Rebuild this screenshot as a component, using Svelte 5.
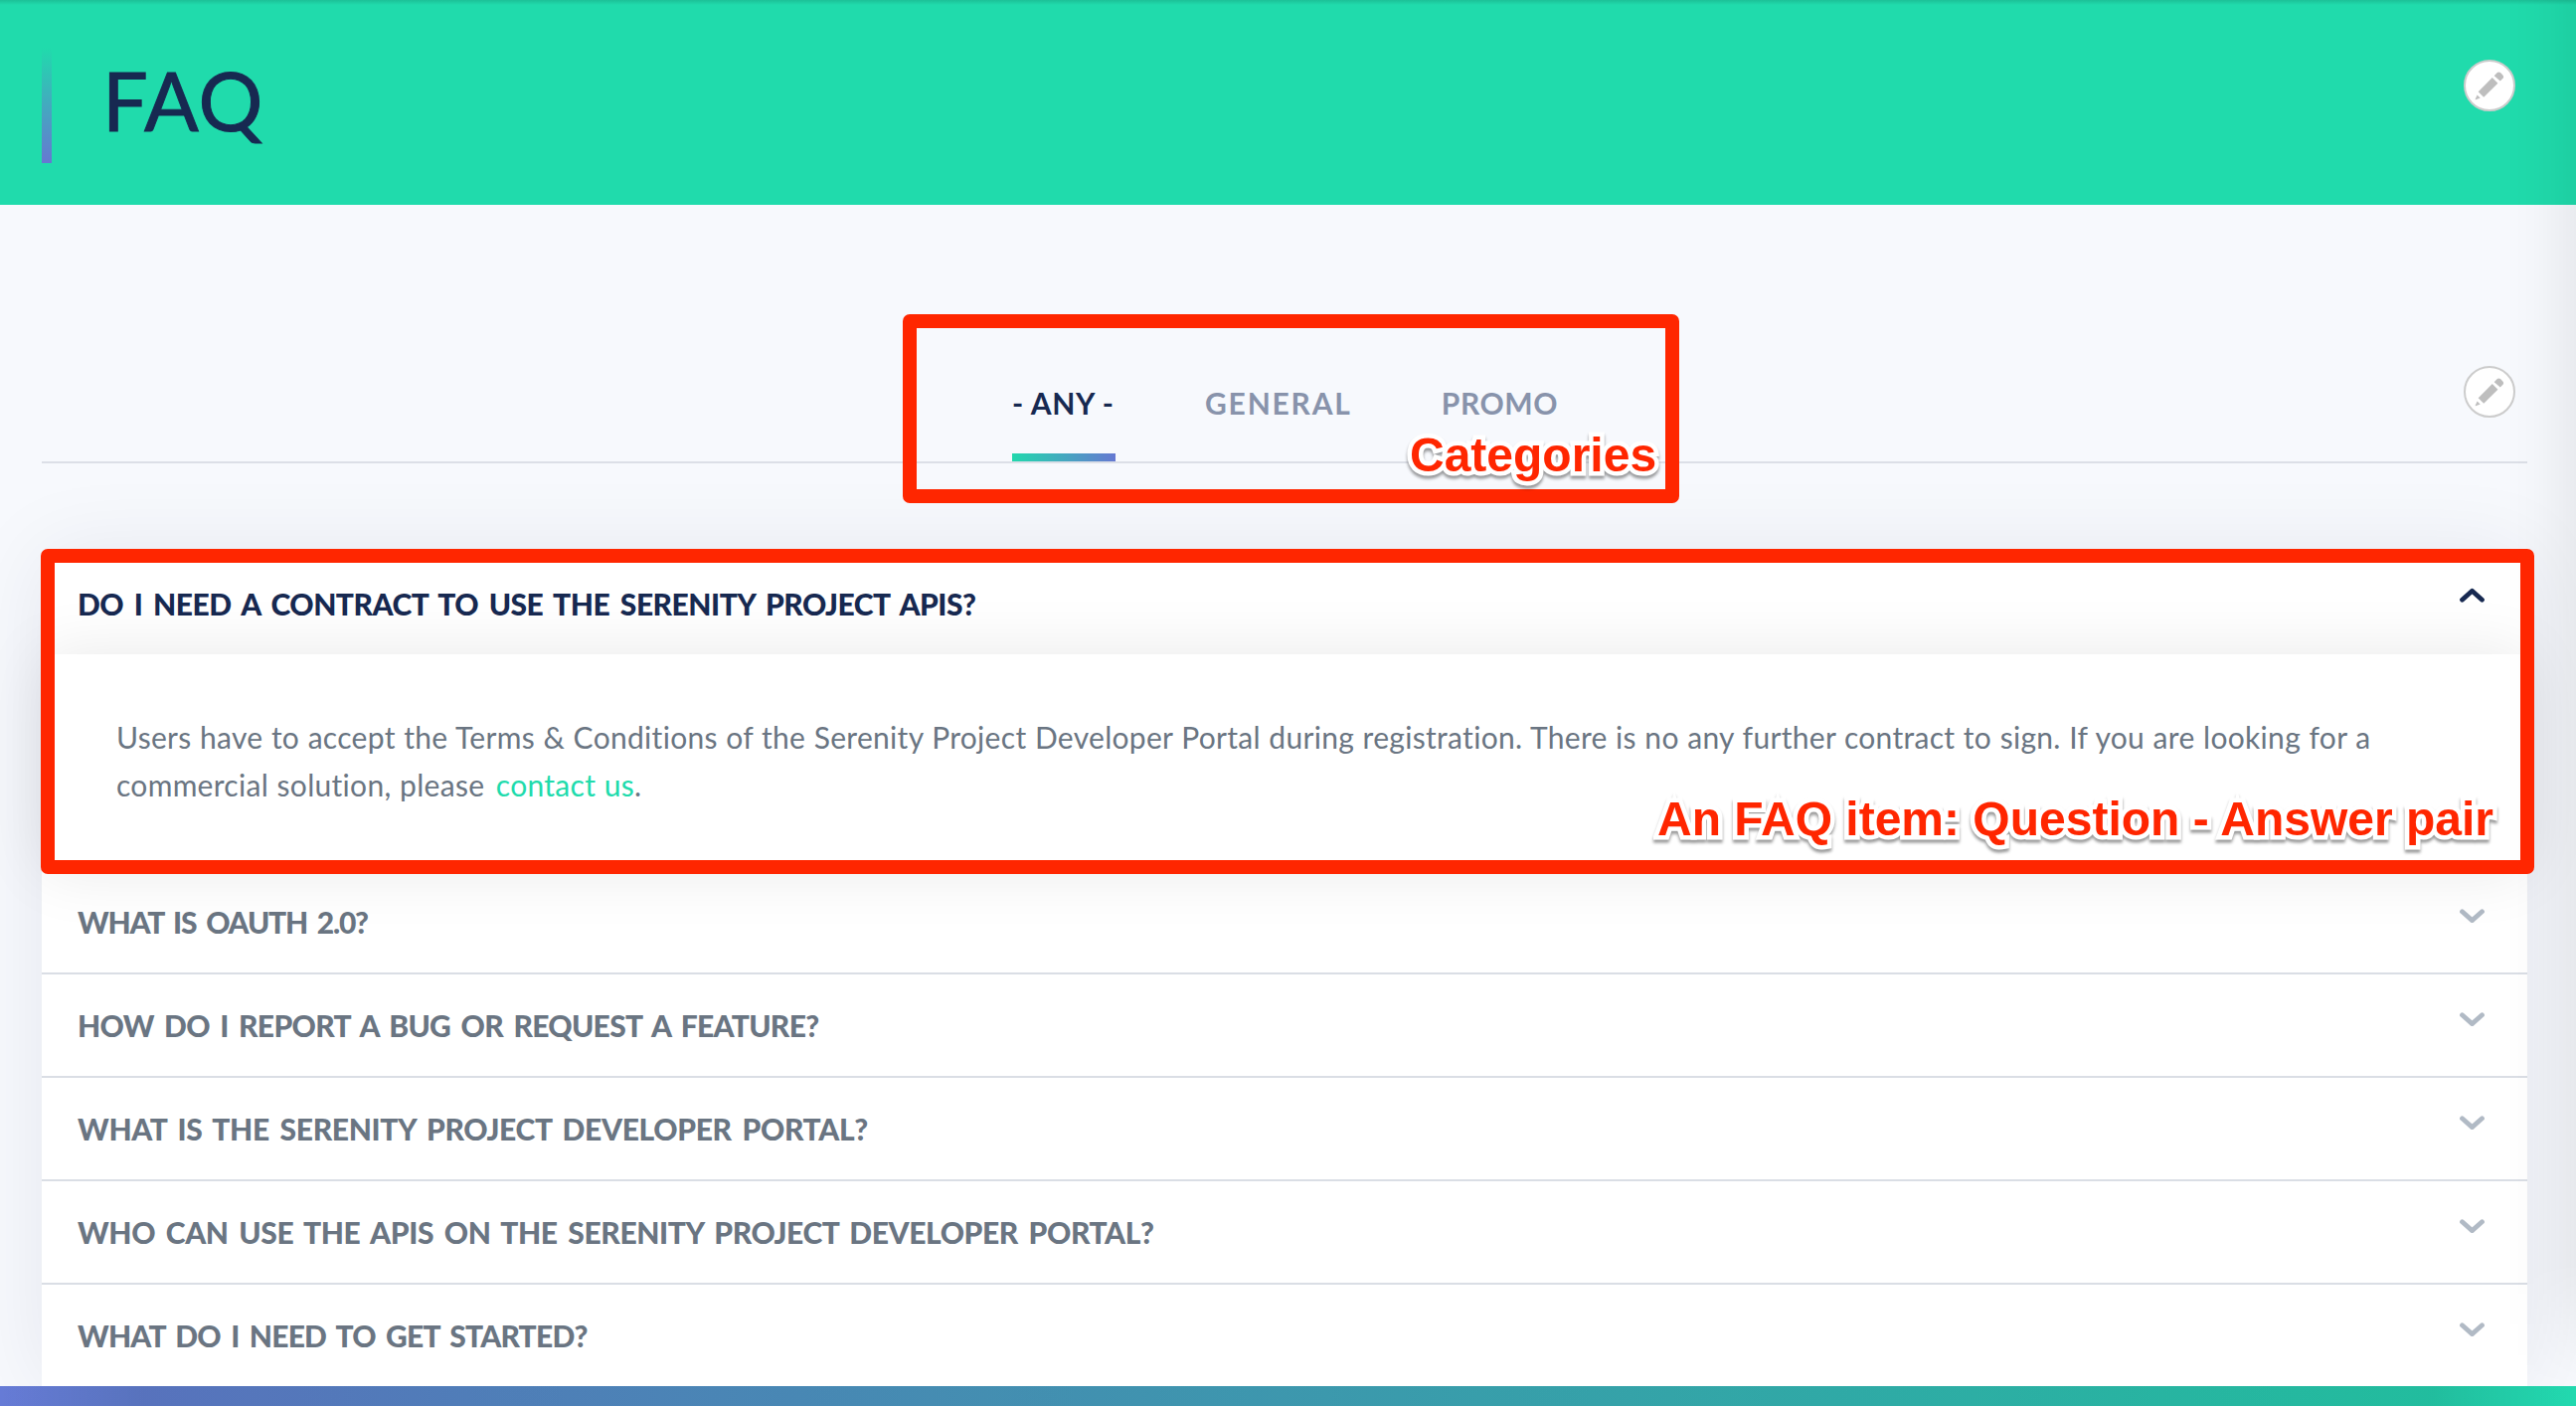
<script>
  const tabs = [
    { name: '- ANY -', tracking: 0.62, active: true },
    { name: 'GENERAL', tracking: 1.8 },
    { name: 'PROMO', tracking: 0.6 }
  ];
  const questions = [
    { text: 'WHAT IS OAUTH 2.0?', tracking: -1.22 },
    { text: 'HOW DO I REPORT A BUG OR REQUEST A FEATURE?', tracking: -0.69 },
    { text: 'WHAT IS THE SERENITY PROJECT DEVELOPER PORTAL?', tracking: -0.34 },
    { text: 'WHO CAN USE THE APIS ON THE SERENITY PROJECT DEVELOPER PORTAL?', tracking: -0.4 },
    { text: 'WHAT DO I NEED TO GET STARTED?', tracking: -0.79 }
  ];
</script>

{#snippet editButton()}
  <button class="edit" aria-label="Edit">
    <svg viewBox="0 0 52 52" width="52" height="52">
      <circle cx="26" cy="26" r="25" fill="#fff" stroke="#ccc" stroke-width="2" />
      <g fill="#bebebe">
        <path d="M14.7 32.2 28.8 18l5.6 5.7L20.2 37.8z" />
        <path d="M13.6 35.6 16.7 38.6 12.2 40.3Q11.4 40.5 11.7 39.7z" />
        <path d="M30.7 16.2 33.5 13.3Q35 11.8 37 13.1L38.9 15Q41 17.2 39.5 18.7L36.8 21.6z" />
      </g>
    </svg>
  </button>
{/snippet}

<div class="page">
  <header>
    <h1>FAQ</h1>
    {@render editButton()}
  </header>

  <main>
    <div class="filter">
      <nav>
        {#each tabs as tab}
          <a class="tab" class:active={tab.active} style="letter-spacing: {tab.tracking}px">{tab.name}</a>
        {/each}
      </nav>
      <div class="filter-edit">{@render editButton()}</div>
    </div>

    <section class="card">
      <div class="row open">
        <h2>DO I NEED A CONTRACT TO USE THE SERENITY PROJECT APIS?</h2>
        <svg class="chevron" viewBox="0 0 25 15" width="25" height="15"><path d="M2.5 12.2 12.5 3.2 22.5 12.2" /></svg>
      </div>
      <div class="answer">
        <p>
          Users have to accept the Terms &amp; Conditions of the Serenity Project Developer Portal during registration. There is no any further contract to sign. If you are looking for a<br />commercial solution, please <span class="link">contact us</span>.
        </p>
      </div>
      {#each questions as q}
        <div class="row">
          <h2 style="letter-spacing: {q.tracking}px">{q.text}</h2>
          <svg class="chevron" viewBox="0 0 25 15" width="25" height="15"><path d="M2.5 2.8 12.5 11.6 22.5 2.8" /></svg>
        </div>
      {/each}
    </section>
  </main>

  <footer></footer>

  <div class="edge-shade"></div>
  <div class="frame frame-categories"></div>
  <div class="frame frame-item"></div>
  <div class="note note-categories">Categories</div>
  <div class="note note-item">An FAQ item: Question - Answer pair</div>
</div>

<style>
  :global(body) {
    margin: 0;
    overflow: hidden;
  }
  .page {
    position: relative;
    box-sizing: border-box;
    width: 2591px;
    height: 1414px;
    overflow: hidden;
    display: flex;
    flex-direction: column;
    background: #f7f9fd;
    font-family: Lato, "Open Sans", sans-serif;
    font-size: 30px;
    color: #6a7582;
  }
  header {
    flex: none;
    box-sizing: border-box;
    height: 206px;
    padding: 48px 61px 0 42px;
    display: flex;
    justify-content: space-between;
    align-items: flex-start;
    background: linear-gradient(rgba(0, 0, 0, 0.12), transparent 5px), #20dbac;
  }
  h1 {
    box-sizing: border-box;
    height: 116px;
    margin: 0;
    padding-left: 61px;
    font-size: 81px;
    font-weight: 400;
    line-height: 106px;
    letter-spacing: 1px;
    color: #172951;
    -webkit-text-stroke: 1px #172951;
    background: linear-gradient(rgba(102, 120, 210, 0), #6678d2) left top / 10px 116px no-repeat;
  }
  .edit {
    display: block;
    width: 52px;
    height: 52px;
    margin-top: 12px;
    padding: 0;
    border: 0;
    background: none;
  }
  .edit svg {
    display: block;
  }
  main {
    flex: 1;
    min-height: 0;
    padding: 0 49px 0 42px;
  }
  .filter {
    box-sizing: border-box;
    height: 260px;
    padding: 150px 12px 0 0;
    display: grid;
    grid-template-columns: 1fr;
    border-bottom: 2px solid #dcdfe7;
  }
  nav,
  .filter-edit {
    grid-area: 1 / 1;
  }
  nav {
    display: flex;
    gap: 90px;
    padding: 24px 0 0 976px;
  }
  .filter-edit {
    justify-self: end;
  }
  .tab {
    height: 84px;
    box-sizing: border-box;
    line-height: 50px;
    font-weight: 700;
    white-space: pre;
    color: #8893ab;
  }
  .tab.active {
    width: 104px;
    color: #172951;
    background: linear-gradient(90deg, #22d8ad, #6678d2) left bottom / 100% 8px no-repeat;
  }
  .card {
    margin-top: 90px;
    height: 838px;
    background: #fff;
    box-shadow: 0 0 80px rgba(20, 30, 60, 0.08);
  }
  .row {
    box-sizing: border-box;
    height: 104px;
    padding: 26px 43px 0 36px;
    display: flex;
    justify-content: space-between;
    border-bottom: 2px solid #dadee5;
  }
  .row:last-child {
    border-bottom: 0;
  }
  .row.open {
    height: 102px;
    border-bottom: 0;
  }
  h2 {
    margin: 0;
    font-size: 30px;
    font-weight: 900;
    line-height: 50px;
    word-spacing: 4px;
    white-space: nowrap;
  }
  .open h2 {
    color: #172951;
    letter-spacing: -0.48px;
  }
  .chevron {
    display: block;
    margin-top: 12px;
    fill: none;
    stroke: #b1bac5;
    stroke-width: 4.8;
    stroke-linecap: round;
    stroke-linejoin: round;
  }
  .open .chevron {
    margin-top: 9px;
    stroke: #172951;
  }
  .answer {
    position: relative;
    box-sizing: border-box;
    height: 218px;
    padding: 59px 75px 0;
    background: #fff;
    box-shadow: 0 0 60px rgba(0, 0, 0, 0.09);
  }
  p {
    margin: 0;
    line-height: 48px;
    letter-spacing: 0.3px;
    word-spacing: 0.5px;
    white-space: nowrap;
  }
  .link {
    margin-left: 3px;
    color: #20dbac;
  }
  footer {
    position: relative;
    flex: none;
    height: 20px;
    background:
      linear-gradient(90deg, transparent, rgba(0, 0, 0, 0.11) 145px, rgba(0, 0, 0, 0.11) calc(100% - 145px), transparent),
      linear-gradient(90deg, #667bd6, #22d9af);
  }
  .edge-shade {
    position: absolute;
    top: 0;
    right: 0;
    width: 70px;
    height: 1394px;
    background: linear-gradient(90deg, transparent, rgba(0, 0, 0, 0.015) 45%, rgba(0, 0, 0, 0.055));
    mask-image: linear-gradient(#000 1270px, transparent);
  }
  .frame {
    position: absolute;
    box-sizing: border-box;
    border: 14px solid #ff2600;
    border-radius: 7px;
  }
  .frame-categories {
    left: 908px;
    top: 316px;
    width: 781px;
    height: 190px;
  }
  .frame-item {
    left: 41px;
    top: 552px;
    width: 2508px;
    height: 327px;
  }
  .note {
    position: absolute;
    font: 700 48px/56px "Liberation Sans", Arial, sans-serif;
    white-space: nowrap;
    color: #ff2600;
    -webkit-text-stroke: 9px #fff;
    paint-order: stroke fill;
    stroke-linejoin: round;
    filter: drop-shadow(0 3px 1.5px rgba(0, 0, 0, 0.4));
  }
  .note-categories {
    left: 1418px;
    top: 430px;
  }
  .note-item {
    left: 1667px;
    top: 796px;
  }
</style>
